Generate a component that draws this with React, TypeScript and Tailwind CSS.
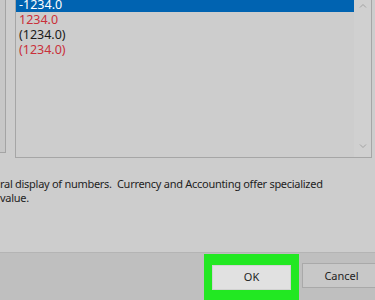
import React from 'react';

const rows = [
    { text: '-1234.0', cls: 'bg-[#0063b1] text-white' },
    { text: '1234.0', cls: 'text-[#c9303a]' },
    { text: '(1234.0)', cls: 'text-[#1a1a1a]' },
    { text: '(1234.0)', cls: 'text-[#c9303a]' },
];

const Chevron: React.FC<{ down?: boolean }> = ({ down }) =>
{
    return (
        <svg width="8" height="5" viewBox="0 0 8 5" className={down ? 'rotate-180' : ''}>
            <path d="M1 4.5 L4 1.5 L7 4.5" fill="none" stroke="#a2a2a2" strokeWidth="1" />
        </svg>
    );
};

const App: React.FC = () =>
{
    return (
        <div className="w-[375px] h-[300px] bg-[#cdcdcd] flex flex-col overflow-hidden font-['Noto_Sans',sans-serif]">
            <div className="h-[257px] flex flex-col">
                <div className="flex h-[158px] items-start">
                    <div className="w-[6px] h-[153px] border-r border-b border-[#a4a4a4] bg-[#c7c7c7]"></div>
                    <div className="ml-[9px] w-[357px] h-[158px] border-x border-b border-[#a6a6a6] flex overflow-hidden">
                        <div className="w-[338px] overflow-hidden">
                            <div className="mt-[-3px] flex flex-col">
                                {rows.map((r, i) => (
                                    <div key={i} className={`h-[15px] pl-[3px] text-[12.5px] leading-[15px] ${r.cls}`}>
                                        {r.text}
                                    </div>
                                ))}
                            </div>
                        </div>
                        <div className="w-[17px] bg-[#d0d0d0] flex flex-col items-center justify-between pt-[3px] pb-[8px]">
                            <Chevron />
                            <Chevron down />
                        </div>
                    </div>
                </div>
                <p className="mt-[19px] text-[11px] leading-[14px] tracking-[-0.28px] text-[#1e1e1e] whitespace-pre">
                    {'ral display of numbers.  Currency and Accounting offer specialized\nvalue.'}
                </p>
            </div>
            <div className="h-[1px] bg-[#b4b4b4]"></div>
            <div className="flex-1 bg-[#bfbfbf] flex items-start pl-[204px]">
                <div className="mt-[1px] bg-[#22e822] pt-[9px] px-[8px] pb-[10px]">
                    <button className="w-[79px] h-[25px] bg-[#e1e1e1] border border-[#d2d2d2] text-[11px] text-[#1e1e1e]">
                        OK
                    </button>
                </div>
                <button className="ml-[3px] mt-[10px] w-[79px] h-[25px] bg-[#c8c8c8] border border-[#a9a9a9] text-[11px] text-[#1e1e1e] shrink-0">
                    Cancel
                </button>
            </div>
        </div>
    );
};

export default App;
